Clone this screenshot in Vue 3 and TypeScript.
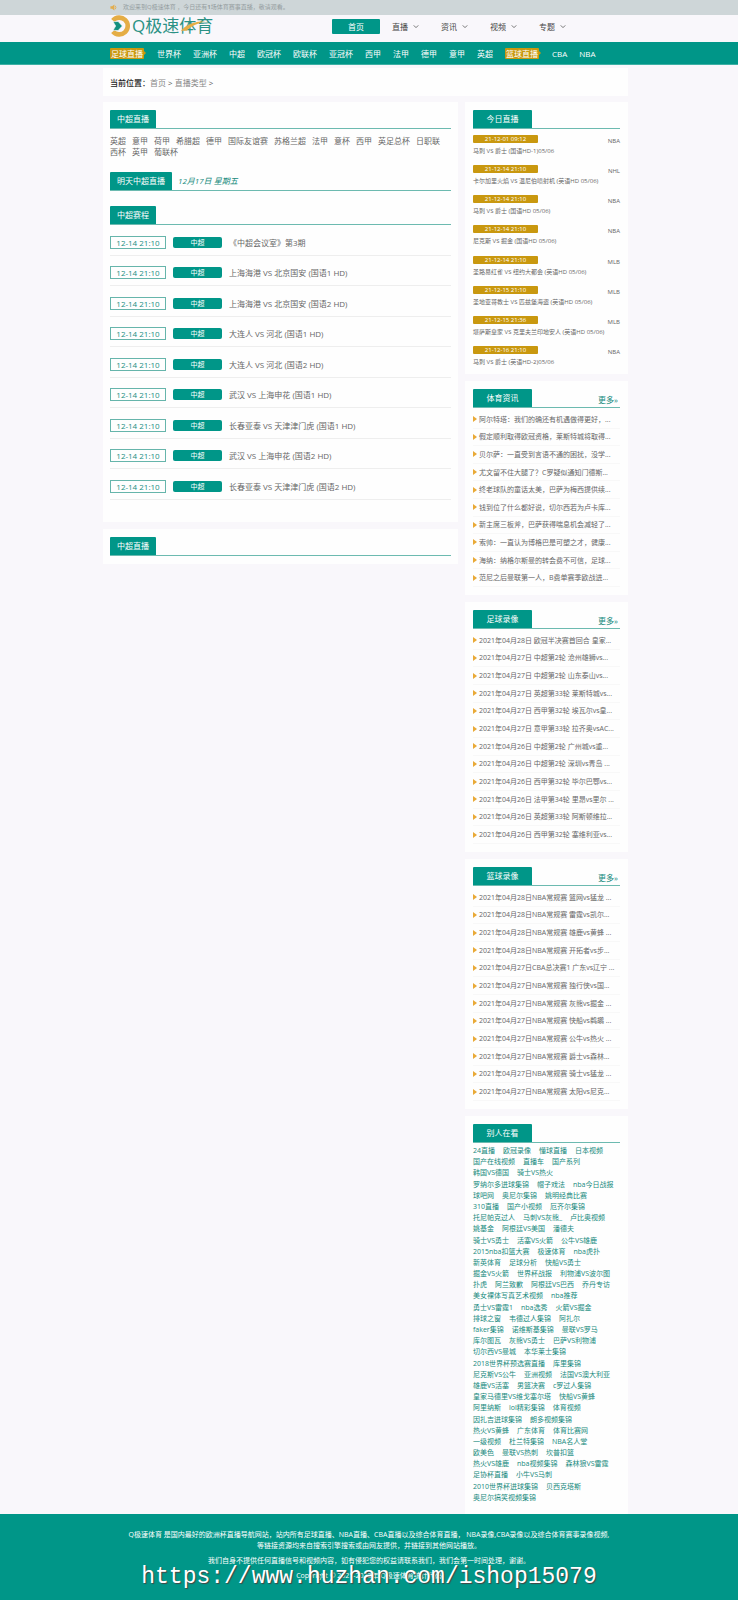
<script setup lang="ts">
interface Match { time: string; league: string; title: string }
interface Panel { title: string; items: string[] }

const menus: string[] = ['直播', '资讯', '视频', '专题']

const leagues: { name: string; hot?: boolean }[] = [
  { name: '足球直播', hot: true }, { name: '世界杯' }, { name: '亚洲杯' }, { name: '中超' },
  { name: '欧冠杯' }, { name: '欧联杯' }, { name: '亚冠杯' }, { name: '西甲' }, { name: '法甲' },
  { name: '德甲' }, { name: '意甲' }, { name: '英超' }, { name: '篮球直播', hot: true },
  { name: 'CBA' }, { name: 'NBA' },
]

const tags: string[] = ['英超', '意甲', '荷甲', '希腊超', '德甲', '国际友谊赛', '苏格兰超', '法甲', '意杯', '西甲', '英足总杯', '日职联', '西杯', '英甲', '葡联杯']

const schedule: Match[] = [
  '《中超会议室》第3期',
  '上海海港 VS 北京国安 (国语1 HD)',
  '上海海港 VS 北京国安 (国语2 HD)',
  '大连人 VS 河北 (国语1 HD)',
  '大连人 VS 河北 (国语2 HD)',
  '武汉 VS 上海申花 (国语1 HD)',
  '长春亚泰 VS 天津津门虎 (国语1 HD)',
  '武汉 VS 上海申花 (国语2 HD)',
  '长春亚泰 VS 天津津门虎 (国语2 HD)',
].map((title) => ({ time: '12-14 21:10', league: '中超', title }))

const today: Match[] = [
  { time: '21-12-01 09:12', league: 'NBA', title: '马刺 VS 爵士 (国语HD-1)05/06' },
  { time: '21-12-14 21:10', league: 'NHL', title: '卡尔加里火焰 VS 温尼伯喷射机 (英语HD 05/06)' },
  { time: '21-12-14 21:10', league: 'NBA', title: '马刺 VS 爵士 (国语HD 05/06)' },
  { time: '21-12-14 21:10', league: 'NBA', title: '尼克斯 VS 掘金 (国语HD 05/06)' },
  { time: '21-12-14 21:10', league: 'MLB', title: '圣路易红雀 VS 纽约大都会 (英语HD 05/06)' },
  { time: '21-12-15 21:10', league: 'MLB', title: '圣地亚哥教士 VS 匹兹堡海盗 (英语HD 05/06)' },
  { time: '21-12-15 21:36', league: 'MLB', title: '堪萨斯皇家 VS 克里夫兰印地安人 (英语HD 05/06)' },
  { time: '21-12-16 21:10', league: 'NBA', title: '马刺 VS 爵士 (英语HD-2)05/06' },
]

const panels: Panel[] = [
  {
    title: '体育资讯',
    items: [
      '阿尔特塔：我们的确还有机遇做得更好，...',
      '假定顺利取得欧冠资格，莱斯特城将取得...',
      '贝尔萨：一直受到言语不通的困扰，没学...',
      '尤文留不住大腿了？C罗疑似通知门德斯...',
      '终老球队的童话太美，巴萨为梅西提供续...',
      '钱到位了什么都好说，切尔西若为卢卡库...',
      '新主席三板斧，巴萨获得喘息机会减轻了...',
      '索帅：一直认为博格巴是可塑之才，健康...',
      '海纳：纳格尔斯曼的转会费不可信，足球...',
      '范尼之后曼联第一人，B费单赛季欧战进...',
    ],
  },
  {
    title: '足球录像',
    items: [
      '2021年04月28日 欧冠半决赛首回合 皇家...',
      '2021年04月27日 中超第2轮 沧州雄狮vs...',
      '2021年04月27日 中超第2轮 山东泰山vs...',
      '2021年04月27日 英超第33轮 莱斯特城vs...',
      '2021年04月27日 西甲第32轮 埃瓦尔vs皇...',
      '2021年04月27日 意甲第33轮 拉齐奥vsAC...',
      '2021年04月26日 中超第2轮 广州城vs重...',
      '2021年04月26日 中超第2轮 深圳vs青岛 ...',
      '2021年04月26日 西甲第32轮 毕尔巴鄂vs...',
      '2021年04月26日 法甲第34轮 里昂vs里尔 ...',
      '2021年04月26日 英超第33轮 阿斯顿维拉...',
      '2021年04月26日 西甲第32轮 塞维利亚vs...',
    ],
  },
  {
    title: '篮球录像',
    items: [
      '2021年04月28日NBA常规赛 篮网vs猛龙 ...',
      '2021年04月28日NBA常规赛 雷霆vs凯尔...',
      '2021年04月28日NBA常规赛 雄鹿vs黄蜂 ...',
      '2021年04月28日NBA常规赛 开拓者vs步...',
      '2021年04月27日CBA总决赛1 广东vs辽宁 ...',
      '2021年04月27日NBA常规赛 独行侠vs国...',
      '2021年04月27日NBA常规赛 灰熊vs掘金 ...',
      '2021年04月27日NBA常规赛 快船vs鹈鹕 ...',
      '2021年04月27日NBA常规赛 公牛vs热火 ...',
      '2021年04月27日NBA常规赛 爵士vs森林...',
      '2021年04月27日NBA常规赛 骑士vs猛龙 ...',
      '2021年04月27日NBA常规赛 太阳vs尼克...',
    ],
  },
]

const keywords: string[][] = [
  ['24直播', '欧冠录像', '懂球直播', '日本视频'],
  ['国产在线视频', '直播车', '国产系列'],
  ['韩国VS德国', '骑士VS热火'],
  ['罗纳尔多进球集锦', '帽子戏法', 'nba今日战报'],
  ['球吧网', '奥尼尔集锦', '姚明经典比赛'],
  ['310直播', '国产小视频', '厄齐尔集锦'],
  ['托尼帕克过人', '马刺VS灰熊_', '卢比奥视频'],
  ['姚基金', '阿根廷VS美国', '潘德夫'],
  ['骑士VS勇士', '活塞VS火箭', '公牛VS雄鹿'],
  ['2015nba扣篮大赛', '极速体育', 'nba虎扑'],
  ['新英体育', '足球分析', '快船VS勇士'],
  ['掘金VS火箭', '世界杯战报', '利物浦VS波尔图'],
  ['扑虎', '阿兰致歉', '阿根廷VS巴西', '乔丹专访'],
  ['美女裸体写真艺术视频', 'nba推荐'],
  ['勇士VS雷霆1', 'nba选秀', '火箭VS掘金'],
  ['排球之窗', '韦德过人集锦', '阿扎尔'],
  ['faker集锦', '诺维斯基集锦', '曼联VS罗马'],
  ['库尔图瓦', '灰熊VS勇士', '巴萨VS利物浦'],
  ['切尔西VS曼城', '本华莱士集锦'],
  ['2018世界杯预选赛直播', '库里集锦'],
  ['尼克斯VS公牛', '亚洲视频', '法国VS澳大利亚'],
  ['雄鹿VS活塞', '男篮决赛', 'c罗过人集锦'],
  ['皇家马德里VS维戈塞尔塔', '快船VS黄蜂'],
  ['阿里纳斯', 'lol精彩集锦', '体育视频'],
  ['因扎吉进球集锦', '朗多视频集锦'],
  ['热火VS黄蜂', '广东体育', '体育比赛网'],
  ['一级视频', '杜兰特集锦', 'NBA名人堂'],
  ['欧美色', '曼联VS热刺', '坎普扣篮'],
  ['热火VS雄鹿', 'nba视频集锦', '森林狼VS雷霆'],
  ['足协杯直播', '小牛VS马刺'],
  ['2010世界杯进球集锦', '贝西克塔斯'],
  ['奥尼尔搞笑视频集锦'],
]
</script>

<template>
  <div class="page">
    <div class="notice">
      <div class="wrap notice-in">
        <svg class="horn" viewBox="0 0 16 16" aria-hidden="true">
          <path d="M1 5h4l5-4v14l-5-4H1z" fill="#e2ad4e" />
          <path d="M12 4q3 4 0 8" fill="none" stroke="#e2ad4e" stroke-width="2" />
        </svg>
        <span>欢迎来到Q极速体育 ，今日还有<b>1</b>场体育赛事直播，敬请观看。</span>
      </div>
    </div>

    <header class="wrap head">
      <a class="logo" href="#">
        <svg class="ring" viewBox="0 0 20 22" aria-hidden="true">
          <path d="M2.4 5.6A8.4 8.4 0 1 1 2.4 16.4" fill="none" stroke="#e5ad45" stroke-width="4.6" />
          <path d="M2.6 6.8L7.6 6.4l4.2 4.6-4.2 4.6-5-.4L5.2 11z" fill="#14907f" stroke="#f9f7fb" stroke-width=".6" />
        </svg>
        <span class="brand">Q极速体育
          <svg class="swoosh" viewBox="0 0 36 12" aria-hidden="true">
            <path d="M1 11Q10 1 27 1Q14 4 7 11z" fill="#e5ad45" />
          </svg>
        </span>
      </a>
      <nav class="menu">
        <a class="home" href="#">首页</a>
        <button v-for="m in menus" :key="m" class="drop" type="button">
          {{ m }}
          <svg viewBox="0 0 8 6" aria-hidden="true"><path d="M1 1.5L4 4.5L7 1.5" fill="none" stroke="#666" stroke-width="1.2" /></svg>
        </button>
      </nav>
    </header>

    <nav class="leagues">
      <div class="wrap leagues-in">
        <a v-for="l in leagues" :key="l.name" href="#" :class="{ hot: l.hot }">{{ l.name }}</a>
      </div>
    </nav>

    <div class="wrap body">
      <div class="card crumbs">
        <strong>当前位置：</strong><a href="#">首页</a> &gt; <a href="#">直播类型</a> &gt;
      </div>
      <div class="columns">
        <main class="main">
          <section class="card first">
            <div class="title"><h2>中超直播</h2></div>
            <div class="tags"><a v-for="t in tags" :key="t" href="#">{{ t }}</a></div>
            <div class="title"><h2>明天中超直播</h2><em>12月17日 星期五</em></div>
            <div class="title spaced"><h2>中超赛程</h2></div>
            <ul class="schedule">
              <li v-for="s in schedule" :key="s.title">
                <time>{{ s.time }}</time><span class="badge">{{ s.league }}</span><a href="#">{{ s.title }}</a>
              </li>
            </ul>
          </section>
          <section class="card">
            <div class="title"><h2>中超直播</h2></div>
          </section>
        </main>

        <aside class="side">
          <section class="card live">
            <div class="title"><h2>今日直播</h2></div>
            <ul class="today">
              <li v-for="t in today" :key="t.title">
                <div class="meta"><time>{{ t.time }}</time><span>{{ t.league }}</span></div>
                <a href="#">{{ t.title }}</a>
              </li>
            </ul>
          </section>
          <section v-for="p in panels" :key="p.title" class="card">
            <div class="title"><h2>{{ p.title }}</h2><a class="more" href="#">更多»</a></div>
            <ul class="list" :class="{ short: p.items.length < 12 }">
              <li v-for="i in p.items" :key="i"><a href="#">{{ i }}</a></li>
            </ul>
          </section>
          <section class="card last">
            <div class="title"><h2>别人在看</h2></div>
            <div class="keywords">
              <div v-for="(row, n) in keywords" :key="n"><a v-for="k in row" :key="k" href="#">{{ k }}</a></div>
            </div>
          </section>
        </aside>
      </div>
    </div>

    <footer class="foot">
      <p>Q极速体育 是国内最好的欧洲杯直播导航网站，站内所有足球直播、NBA直播、CBA直播以及综合体育直播， NBA录像,CBA录像以及综合体育赛事录像视频,<br />等链接资源均来自搜索引擎搜索或由网友提供，并链接到其他网站播放。</p>
      <p>我们自身不提供任何直播信号和视频内容，如有侵犯您的权益请联系我们，我们会第一时间处理，谢谢。</p>
      <p>Copyright © 2021-2022年 Q极速体育统计代码</p>
      <div class="mark">https://www.huzhan.com/ishop15079</div>
    </footer>
  </div>
</template>

<style>
body { margin: 0; background: #f9f7fb; }
</style>

<style scoped>
.page {
  font: 8px/11px "Open Sans", "Noto Sans CJK SC", sans-serif;
  color: #666;
}
.page * { box-sizing: border-box; }
a { color: inherit; text-decoration: none; white-space: nowrap; }
ul { list-style: none; margin: 0; padding: 0; }
h2, p { margin: 0; }
.wrap { max-width: 532px; margin: 0 auto; }

.notice { background: #ced6d8; color: #949d9f; font-size: 6px; }
.notice-in { display: flex; align-items: center; gap: 6px; height: 15px; padding-left: 7px; }
.horn { width: 7px; height: 7px; }

.head { display: flex; justify-content: space-between; height: 27px; padding-left: 7px; }
.logo { display: flex; align-items: flex-start; gap: 1px; }
.ring { width: 21px; height: 22px; }
.brand { position: relative; font-size: 17px; line-height: 22px; color: #2b9184; }
.swoosh { position: absolute; right: -1px; top: 5px; width: 34px; height: 12px; }
.menu { display: flex; align-items: center; padding: 0 47px 4px 0; }
.home { width: 48px; margin-right: 12px; background: #009688; color: #fff; text-align: center; line-height: 15px; border-radius: 1px; }
.drop { display: flex; align-items: center; gap: 5px; width: 49px; padding: 0; border: 0; background: none; font: inherit; color: #444; }
.drop svg { width: 6px; height: 5px; }

.leagues { background: #009688; border-bottom: 1px solid #3db0a4; }
.leagues-in { display: flex; align-items: center; gap: 12px; height: 22px; padding-left: 7px; color: #fff; }
.hot { position: relative; padding: 0 1px; margin-right: 1px; background: #c9980f; border-radius: 1px; }
.hot::after { content: ""; position: absolute; left: 100%; top: 3px; border: 2px solid transparent; border-left-color: #c9980f; }

.body { padding-right: 7px; }
.card { background: #fefefe; padding: 8px 7px; }
.crumbs { margin: 3px 0 6px; height: 28px; padding: 9px 7px; color: #555; }
.crumbs strong { color: #222; font-weight: 500; }
.crumbs a { color: #888; }
.columns { display: grid; grid-template-columns: minmax(0, 355fr) minmax(0, 163fr); gap: 7px; align-items: start; }
.main, .side { display: grid; grid-template-columns: minmax(0, 1fr); gap: 7px; }

.title { display: flex; align-items: flex-end; border-bottom: 1px solid #6cbab0; color: #168a7d; }
.title h2 { padding: 0 7px; min-width: 45px; background: #009688; color: #fff; font-size: 8px; font-weight: 400; line-height: 18px; text-align: center; border-radius: 1px 1px 0 0; }
.title em { padding-left: 6px; line-height: 18px; }
.side .card { padding: 8px; }
.side .title h2 { width: 59px; }
.more { margin-left: auto; padding-right: 2px; line-height: 15px; }

.first { padding-bottom: 22px; }
.tags { display: flex; flex-wrap: wrap; column-gap: 6px; padding: 6px 0 15px; }
.spaced { margin-top: 15px; }
.schedule { display: grid; grid-auto-rows: 1fr; min-height: 275px; }
.schedule li { display: flex; align-items: flex-end; gap: 7px; padding-bottom: 6px; border-bottom: 1px solid #eee; }
.schedule time { width: 56px; border: 1px solid #66b5ab; color: #238f83; text-align: center; }
.badge { width: 49px; margin-bottom: 1px; background: #009688; color: #fff; font-size: 7px; text-align: center; border-radius: 2px; }
.schedule a { line-height: 13px; }

.side .live { padding-bottom: 7px; }
.today { display: grid; align-content: space-between; min-height: 238px; padding-top: 6px; font-size: 6px; }
.today li { line-height: 10px; }
.meta { display: flex; gap: 8px; justify-content: space-between; height: 11px; }
.meta time { width: 65px; height: 8px; background: #c9980f; color: #fff; line-height: 8px; text-align: center; border-radius: 1px; }
.meta span { line-height: 12px; }

.list { display: grid; grid-auto-rows: 1fr; min-height: 215px; padding-top: 3px; font-size: 7px; }
.list.short { min-height: 179px; }
.list li { display: flex; align-items: center; border-bottom: 1px solid #f8f8f8; }
.list li::before { content: ""; border: 3px solid transparent; border-left: 4px solid #e9a936; border-right: 0; margin-right: 2px; }

.side .last { padding-bottom: 11px; }
.keywords { display: grid; grid-auto-rows: 1fr; min-height: 360px; padding-top: 2px; color: #168a7d; font-size: 7px; }
.keywords div { display: flex; gap: 8px; }

.foot { position: relative; min-height: 86px; padding-top: 15px; background: #009688; color: #fff; font-size: 7px; text-align: center; }
.foot p { margin-bottom: 4px; }
.mark { position: absolute; left: 0; right: 0; top: 48px; font: 23px/30px "Liberation Mono", monospace; color: #fff; text-shadow: 1px 1px 1px #444; white-space: nowrap; }
</style>
